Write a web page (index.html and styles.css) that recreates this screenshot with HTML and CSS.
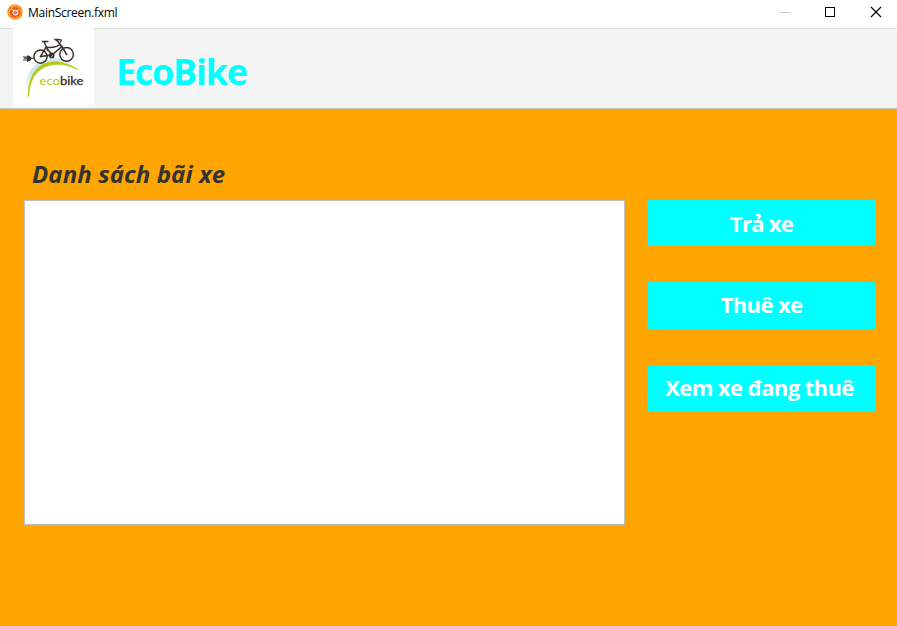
FILE: index.html
```html
<!DOCTYPE html>
<html lang="vi">
<head>
<meta charset="utf-8">
<title>MainScreen.fxml</title>
<link rel="stylesheet" href="styles.css">
</head>
<body>
<div class="window">
  <div class="titlebar">
    <svg class="app-icon" width="16" height="16" viewBox="0 0 16 16">
      <circle cx="8" cy="8" r="7.8" fill="#f9a01f"/>
      <circle cx="8.2" cy="8.2" r="5.1" fill="#ea5426"/>
      <path d="M3 3.8 6 6M13.2 4.2 11 6.4M5 12.6 6.3 11" stroke="#ea5426" stroke-width="1.5"/>
      <circle cx="8.4" cy="8.6" r="2.5" fill="#f27b45" stroke="#fff" stroke-width="1"/>
      <path d="M3.8 4.6 7 6.6M12.6 4.8 10.2 6.8" fill="none" stroke="#fff" stroke-width=".9"/>
    </svg>
    <span class="caption">MainScreen.fxml</span>
    <svg class="controls" width="137" height="28" viewBox="0 0 137 28" fill="none">
      <path d="M20 12.5h10" stroke="#ccc"/>
      <rect x="65.5" y="7.5" width="9" height="9" stroke="#000"/>
      <path d="M111 7l10 10M121 7l-10 10" stroke="#000" stroke-width="1.1"/>
    </svg>
  </div>
  <header class="header">
    <svg class="logo" width="81" height="79" viewBox="0 0 81 79" fill="none">
      <rect width="81" height="79" fill="#fff"/>
      <path d="M13 58C14 42 24 31 40 30C47 29.5 53 32 58 35C48 33 37 33 29 38C19 44 15 52 13 58Z" fill="#cfe8f5"/>
      <path d="M15.5 69C14 54 20 41 31 36C42 31 55 35 65 41.5C53 36 42 34.5 32 39C20 44 16.5 56 15.5 69Z" fill="#b5c90f" stroke="#b5c90f" stroke-width=".7"/>
      <g stroke="#3b302d" stroke-width="1.5">
        <circle cx="27.5" cy="28.6" r="6.6"/>
        <circle cx="53.6" cy="26.4" r="6.8"/>
        <circle cx="38.8" cy="27.4" r="2" stroke-width="1.7"/>
        <path d="M27.5 28.6 33 19 39 27 49 18.5 53.6 26.4M33 19Q41 21 48 16M27.5 28.6 39 27M35 23 31 13.5M28.8 13.5H35.5M46 11.5H42.5L44.5 13 49 19"/>
        <path d="M42.5 11.8C45 12.5 46.5 10.7 48.3 12L47.5 14.5" stroke-width="1.3"/>
        <path d="M21 30.3H11M10 29h4M10 32h4" stroke-width="1.1"/>
        <path d="M14 27.3V33.7Q18.4 33 18.4 30.5Q18.4 28 14 27.3Z" fill="#3b302d" stroke="none"/>
        <circle cx="27.5" cy="28.6" r=".9" fill="#3b302d" stroke="none"/>
        <circle cx="53.6" cy="26.4" r=".9" fill="#3b302d" stroke="none"/>
      </g>
      <text class="logo-text" x="26.5" y="56.7" textLength="44" lengthAdjust="spacingAndGlyphs" fill="#3b302d"><tspan fill="#b5c90f">eco</tspan><tspan stroke="#3b302d" stroke-width=".3">bike</tspan></text>
    </svg>
    <h1 class="brand">EcoBike</h1>
  </header>
  <main class="content">
    <section class="stations">
      <h2 class="heading">Danh sách bãi xe</h2>
      <div class="list"></div>
    </section>
    <nav class="actions">
      <button class="action action-return">Trả xe</button>
      <button class="action">Thuê xe</button>
      <button class="action action-view">Xem xe đang thuê</button>
    </nav>
  </main>
</div>
</body>
</html>
```
FILE: styles.css
```css
* { box-sizing: border-box; }
body { margin: 0; font-family: "Open Sans", "Noto Sans", sans-serif; }
.window { width: 897px; height: 626px; display: flex; flex-direction: column; background: #ffa500; overflow: hidden; }
.titlebar { height: 28px; flex: none; display: flex; align-items: flex-start; background: #fff; }
.app-icon { margin: 4px 0 0 7px; }
.caption { margin: 4px 0 0 5px; font: 12px/17px "Open Sans", "Noto Sans", sans-serif; letter-spacing: -0.28px; color: #000; }
.controls { margin-left: auto; }
.header { height: 81px; flex: none; display: flex; align-items: flex-start; padding-left: 13px; background: #f4f4f4; border-top: 1px solid #dcdcdc; border-bottom: 1px solid #c8c8c8; }
.logo { flex: none; margin-top: -1px; }
.logo-text { font-family: Lato, sans-serif; font-size: 11.5px; }
.brand { margin: 18px 0 0 22px; font-size: 36px; line-height: 49px; font-weight: 700; letter-spacing: -1.3px; color: #0ff; }
.content { flex: 1; display: flex; padding: 48px 21px 0 24px; gap: 22px; }
.stations { flex: none; width: 601px; }
.heading { margin: 0; padding-left: 8px; height: 43px; font-size: 24px; line-height: 34px; font-weight: 700; font-style: italic; letter-spacing: 0.1px; color: #333; white-space: nowrap; }
.list { height: 325px; background: #fff; border: 1px solid #c0c0c0; }
.actions { flex: none; width: 229px; padding-top: 43px; display: flex; flex-direction: column; gap: 36px; }
.action { height: 47px; padding: 0 0 4px; border: 0; border-radius: 3px; background: #0ff; color: #fff; font: 700 22px/30px "Open Sans", "Noto Sans", sans-serif; letter-spacing: -0.6px; white-space: nowrap; }
.action-return { height: 46px; padding: 0 0 1px; letter-spacing: -0.7px; }
.action-view { padding-right: 4px; }
```
